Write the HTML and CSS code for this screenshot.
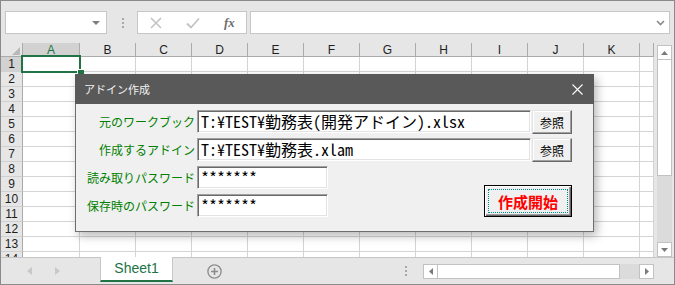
FILE: index.html
```html
<!DOCTYPE html>
<html lang="ja">
<head>
<meta charset="utf-8">
<title>Excel - アドイン作成</title>
<link rel="stylesheet" href="styles.css">
</head>
<body>
<div class="app">
  <div class="toolbar">
    <div class="namebox"><span class="dd"></span></div>
    <div class="grip"><i></i><i></i><i></i></div>
    <div class="fxbox">
      <svg class="ic-x" width="12" height="12" viewBox="0 0 12 12"><path d="M1 1L11 11M11 1L1 11" stroke="#c3c3c3" stroke-width="1.6" fill="none"/></svg>
      <svg class="ic-ok" width="14" height="12" viewBox="0 0 14 12"><path d="M1 6.5L5 10.5L13 1.5" stroke="#c3c3c3" stroke-width="1.8" fill="none"/></svg>
      <span class="fx">fx</span>
    </div>
    <div class="formula">
      <svg width="9" height="6" viewBox="0 0 9 6"><path d="M1 1L4.5 4.5L8 1" stroke="#8a8a8a" stroke-width="1.6" fill="none"/></svg>
    </div>
  </div>

  <div class="main">
    <div class="sheet">
      <div class="corner"><svg width="8" height="8" viewBox="0 0 8 8"><polygon points="8,0 8,8 0,8" fill="#b9b9b9"/></svg></div>
      <div class="colheads">
        <div class="ch sel">A</div><div class="ch">B</div><div class="ch">C</div><div class="ch">D</div>
        <div class="ch">E</div><div class="ch">F</div><div class="ch">G</div><div class="ch">H</div>
        <div class="ch">I</div><div class="ch">J</div><div class="ch">K</div><div class="ch">L</div>
      </div>
      <div class="rowheads">
        <div class="rh sel">1</div><div class="rh">2</div><div class="rh">3</div><div class="rh">4</div>
        <div class="rh">5</div><div class="rh">6</div><div class="rh">7</div><div class="rh">8</div>
        <div class="rh">9</div><div class="rh">10</div><div class="rh">11</div><div class="rh">12</div>
        <div class="rh">13</div><div class="rh">14</div>
      </div>
      <div class="cells">
        <div class="col"></div><div class="col"></div><div class="col"></div><div class="col"></div>
        <div class="col"></div><div class="col"></div><div class="col"></div><div class="col"></div>
        <div class="col"></div><div class="col"></div><div class="col"></div><div class="col"></div>
      </div>
      <div class="selection"><span class="handle"></span></div>
    </div>
    <div class="vscroll">
      <div class="sbtn"><svg width="7" height="4" viewBox="0 0 7 4"><polygon points="0,4 7,4 3.5,0" fill="#7a7a7a"/></svg></div>
      <div class="vthumb"></div>
      <div class="vtrack"></div>
      <div class="sbtn"><svg width="7" height="4" viewBox="0 0 7 4"><polygon points="0,0 7,0 3.5,4" fill="#7a7a7a"/></svg></div>
    </div>
  </div>

  <div class="tabbar">
    <div class="nav">
      <svg class="nl" width="5" height="8" viewBox="0 0 5 8"><polygon points="5,0 5,8 0,4" fill="#c8c8c8"/></svg>
      <svg class="nr" width="5" height="8" viewBox="0 0 5 8"><polygon points="0,0 0,8 5,4" fill="#c8c8c8"/></svg>
    </div>
    <div class="tab">Sheet1</div>
    <div class="add"><svg width="15" height="15" viewBox="0 0 15 15"><circle cx="7.5" cy="7.5" r="6.6" stroke="#8c8c8c" stroke-width="1.3" fill="none"/><path d="M4 7.5H11M7.5 4V11" stroke="#8c8c8c" stroke-width="1.6"/></svg></div>
    <div class="hgrip"><i></i><i></i><i></i></div>
    <div class="hscroll">
      <div class="sbtn"><svg width="4" height="7" viewBox="0 0 4 7"><polygon points="4,0 4,7 0,3.5" fill="#7a7a7a"/></svg></div>
      <div class="hthumb"></div>
      <div class="htrack"></div>
      <div class="sbtn"><svg width="4" height="7" viewBox="0 0 4 7"><polygon points="0,0 0,7 4,3.5" fill="#7a7a7a"/></svg></div>
    </div>
  </div>

  <div class="dialog">
    <div class="dlg-title">
      <span>アドイン作成</span>
      <svg width="11" height="11" viewBox="0 0 11 11"><path d="M0.5 0.5L10.5 10.5M10.5 0.5L0.5 10.5" stroke="#ffffff" stroke-width="1.1" fill="none"/></svg>
    </div>
    <div class="dlg-body">
      <span class="lbl r1">元のワークブック</span>
      <div class="field r1">T:¥TEST¥勤務表(開発アドイン).xlsx</div>
      <button class="btn r1">参照</button>

      <span class="lbl r2">作成するアドイン</span>
      <div class="field r2">T:¥TEST¥勤務表.xlam</div>
      <button class="btn r2">参照</button>

      <span class="lbl r3">読み取りパスワード</span>
      <div class="field short r3">*******</div>

      <span class="lbl r4">保存時のパスワード</span>
      <div class="field short r4">*******</div>

      <button class="start"><span>作成開始</span></button>
    </div>
  </div>
</div>
</body>
</html>
```

FILE: styles.css
```css
html, body {
  margin: 0;
  padding: 0;
  background: #ffffff;
}

.app {
  position: relative;
  width: 675px;
  height: 285px;
  box-sizing: border-box;
  border: 1px solid #8a8a8a;
  background: #e6e6e6;
  overflow: hidden;
  font-family: "Liberation Sans", Arial, sans-serif;
  display: flex;
  flex-direction: column;
}

/* ---------- toolbar ---------- */
.toolbar {
  height: 42px;
  flex: none;
  box-sizing: border-box;
  padding-top: 10px;
  display: flex;
  align-items: flex-start;
}

.namebox {
  margin-left: 4px;
  width: 102px;
  height: 23px;
  box-sizing: border-box;
  background: #fff;
  border: 1px solid #c6c6c6;
  display: flex;
  justify-content: flex-end;
  align-items: center;
  padding-right: 6px;
}
.namebox .dd {
  width: 0;
  height: 0;
  border-left: 4px solid transparent;
  border-right: 4px solid transparent;
  border-top: 4px solid #7f7f7f;
}

.grip {
  margin-left: 14px;
  width: 3px;
  height: 23px;
  display: flex;
  flex-direction: column;
  justify-content: center;
  align-items: center;
  gap: 2px;
}
.grip i, .hgrip i {
  display: block;
  width: 2px;
  height: 2px;
  background: #a8a8a8;
}

.fxbox {
  margin-left: 13px;
  width: 110px;
  height: 23px;
  box-sizing: border-box;
  background: #fff;
  border: 1px solid #c6c6c6;
  display: flex;
  align-items: center;
}
.ic-x { margin-left: 12px; }
.ic-ok { margin-left: 24px; }
.fx {
  margin-left: 24px;
  font-family: "Liberation Serif", serif;
  font-style: italic;
  font-weight: bold;
  font-size: 13px;
  color: #6e6e6e;
}

.formula {
  margin-left: 3px;
  width: 420px;
  height: 23px;
  box-sizing: border-box;
  background: #fff;
  border: 1px solid #c6c6c6;
  display: flex;
  justify-content: flex-end;
  align-items: center;
  padding-right: 4px;
}

/* ---------- sheet ---------- */
.main {
  height: 214px;
  flex: none;
  display: flex;
}

.sheet {
  position: relative;
  width: 653px;
  display: grid;
  grid-template-columns: 22px 631px;
  grid-template-rows: 14px 200px;
  background: #fff;
  overflow: hidden;
}

.corner {
  background: #e6e6e6;
  box-sizing: border-box;
  border-right: 1px solid #ababab;
  border-bottom: 1px solid #ababab;
  display: flex;
  justify-content: flex-end;
  align-items: flex-end;
  padding: 0 2px 1px 0;
}

.colheads {
  display: flex;
  background: #e6e6e6;
}
.ch {
  width: 56px;
  height: 14px;
  flex: none;
  box-sizing: border-box;
  border-right: 1px solid #ababab;
  border-bottom: 1px solid #ababab;
  font-size: 12px;
  line-height: 15px;
  text-align: center;
  color: #1e1e1e;
}
.ch:first-child { width: 57px; }
.ch:last-child { width: 14px; color: transparent; }
.ch.sel {
  background: #d2d2d2;
  color: #217346;
}

.rowheads {
  display: flex;
  flex-direction: column;
  background: #e6e6e6;
}
.rh {
  height: 15px;
  flex: none;
  box-sizing: border-box;
  border-right: 1px solid #ababab;
  border-bottom: 1px solid #d0d0d0;
  font-size: 12px;
  line-height: 15px;
  text-align: center;
  color: #1e1e1e;
  overflow: hidden;
}
.rh:last-child { height: 5px; border-bottom: none; }
.rh.sel { background: #d2d2d2; }

.cells {
  display: flex;
}
.col {
  width: 56px;
  flex: none;
  box-sizing: border-box;
  border-right: 1px solid #d4d4d4;
  background: repeating-linear-gradient(to bottom, transparent 0 14px, #d4d4d4 14px 15px);
}
.col:first-child { width: 57px; }
.col:last-child { width: 14px; }

.selection {
  position: absolute;
  left: 20px;
  top: 12px;
  width: 60px;
  height: 18px;
  box-sizing: border-box;
  border: 2px solid #217346;
}
.selection .handle {
  position: absolute;
  right: -5px;
  bottom: -5px;
  width: 6px;
  height: 6px;
  background: #217346;
  border: 1px solid #fff;
  border-right: none;
  border-bottom: none;
}

.vscroll {
  width: 20px;
  box-sizing: border-box;
  padding: 2px 0 0 3px;
  display: flex;
  flex-direction: column;
}
.sbtn {
  width: 15px;
  height: 15px;
  flex: none;
  box-sizing: border-box;
  border: 1px solid #c2c2c2;
  background: #fff;
  display: flex;
  align-items: center;
  justify-content: center;
}
.vthumb {
  width: 15px;
  height: 116px;
  box-sizing: border-box;
  background: #fff;
  border: 1px solid #c2c2c2;
  border-top: none;
}
.vtrack {
  width: 15px;
  height: 66px;
  background: #dbdbdb;
}

/* ---------- tab bar ---------- */
.tabbar {
  height: 27px;
  flex: none;
  box-sizing: border-box;
  border-top: 1px solid #c6c6c6;
  display: flex;
  align-items: flex-start;
}
.nav {
  width: 99px;
  height: 26px;
  flex: none;
  display: flex;
  align-items: center;
}
.nl { margin-left: 26px; }
.nr { margin-left: 23px; }

.tab {
  width: 73px;
  height: 25px;
  margin-top: -1px;
  flex: none;
  box-sizing: border-box;
  background: #fff;
  border-left: 1px solid #c6c6c6;
  border-right: 1px solid #c6c6c6;
  border-bottom: 2px solid #217346;
  color: #217346;
  font-size: 14px;
  line-height: 23px;
  text-align: center;
}

.add {
  margin-left: 34px;
  margin-top: 6px;
  width: 15px;
  height: 15px;
  flex: none;
  display: flex;
}

.hgrip {
  margin-left: 182px;
  margin-top: 8px;
  width: 3px;
  display: flex;
  flex-direction: column;
  align-items: center;
  gap: 2px;
}

.hscroll {
  margin-left: 16px;
  margin-top: 6px;
  width: 231px;
  height: 15px;
  flex: none;
  display: flex;
}
.hthumb {
  width: 182px;
  height: 15px;
  box-sizing: border-box;
  background: #fff;
  border: 1px solid #c2c2c2;
  border-left: none;
}
.htrack {
  width: 19px;
  height: 15px;
  background: #dbdbdb;
}

/* ---------- dialog ---------- */
.dialog {
  position: absolute;
  left: 74px;
  top: 73px;
  width: 519px;
  box-shadow: 3px 4px 9px rgba(0, 0, 0, 0.28);
  font-family: "Noto Sans CJK JP", sans-serif;
}
.dlg-title {
  height: 30px;
  box-sizing: border-box;
  background: #595959;
  color: #f2f2f2;
  font-size: 11px;
  display: flex;
  align-items: center;
  justify-content: space-between;
  padding: 0 11px 0 9px;
}

.dlg-body {
  height: 128px;
  box-sizing: border-box;
  background: #f0f0f0;
  border: 1px solid #6e6e6e;
  border-top: none;
  padding-top: 6px;
  display: grid;
  grid-template-columns: 121px 334px 1px 40px;
  grid-template-rows: repeat(4, 23px);
  row-gap: 5px;
  align-content: start;
}
.r1 { grid-row: 1; }
.r2 { grid-row: 2; }
.r3 { grid-row: 3; }
.r4 { grid-row: 4; }

.lbl {
  grid-column: 1;
  justify-self: end;
  align-self: center;
  padding-right: 2px;
  font-size: 12px;
  line-height: 14px;
  color: #008000;
  white-space: nowrap;
}

.field {
  grid-column: 2;
  height: 23px;
  box-sizing: border-box;
  background: #fff;
  border: 1px solid;
  border-color: #a0a0a0 #ffffff #ffffff #a0a0a0;
  box-shadow: inset 1px 1px 0 #696969, inset -1px -1px 0 #e3e3e3;
  padding-left: 3px;
  font-family: "Noto Sans Mono CJK JP", "Liberation Mono", "Noto Sans CJK JP", monospace;
  font-size: 16px;
  line-height: 21px;
  color: #000;
  white-space: nowrap;
  overflow: hidden;
}
.field.short {
  width: 131px;
  justify-self: start;
}

.btn {
  grid-column: 4;
  width: 40px;
  height: 24px;
  align-self: start;
  margin: 0;
  padding: 0;
  box-sizing: border-box;
  background: #f0f0f0;
  border: 1px solid;
  border-color: #e3e3e3 #696969 #696969 #e3e3e3;
  box-shadow: inset -1px -1px 0 #a0a0a0, inset 1px 1px 0 #ffffff;
  font-family: "Noto Sans CJK JP", sans-serif;
  font-size: 12px;
  color: #000;
}

.start {
  grid-column: 2 / 5;
  grid-row: 3 / 5;
  justify-self: end;
  align-self: end;
  width: 88px;
  height: 32px;
  margin: 0;
  padding: 3px;
  box-sizing: border-box;
  background: #f0f0f0;
  border: 1px solid #000;
  box-shadow: inset 1px 1px 0 #ffffff, inset -1px -1px 0 #696969, inset -2px -2px 0 #a0a0a0;
  font-family: "Noto Sans CJK JP", sans-serif;
}
.start span {
  display: flex;
  height: 100%;
  box-sizing: border-box;
  align-items: center;
  justify-content: center;
  border: 1px dotted #008b8b;
  color: #ff0000;
  font-weight: bold;
  font-size: 15px;
  letter-spacing: 0;
}
```
